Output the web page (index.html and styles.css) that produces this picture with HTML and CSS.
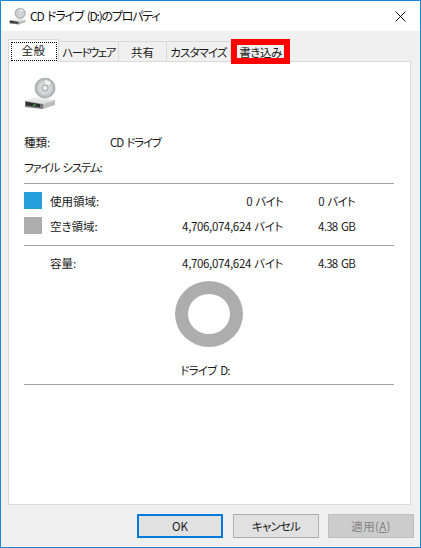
FILE: index.html
```html
<!DOCTYPE html>
<html lang="ja">
<head>
<meta charset="utf-8">
<title>CD ドライブ (D:)のプロパティ</title>
<link rel="stylesheet" href="styles.css">
</head>
<body>
<svg width="0" height="0" class="defs">
  <defs>
    <radialGradient id="disc" cx="50%" cy="50%" r="50%">
      <stop offset="0" stop-color="#f2f2f2"/>
      <stop offset="0.6" stop-color="#d3d6d6"/>
      <stop offset="1" stop-color="#a9adad"/>
    </radialGradient>
    <linearGradient id="top" x1="0" y1="0" x2="0" y2="1">
      <stop offset="0" stop-color="#fafafa"/>
      <stop offset="1" stop-color="#d8d8d8"/>
    </linearGradient>
    <symbol id="cd" viewBox="0 0 32 32">
      <path d="M1 23 13 18l18 4-12 4z" fill="url(#top)"/>
      <path d="M19 26l12-4v5l-12 4z" fill="#bdbdbd"/>
      <circle cx="21" cy="10" r="10" fill="url(#disc)" stroke="#a2a6a6" stroke-width="0.8"/>
      <path d="M21 2a8 8 0 0 1 6 3l-4 3a3 3 0 0 0-2-1z" fill="#eef3ee"/>
      <circle cx="21" cy="10" r="3.200" fill="#e8e8e8" stroke="#9a9a9a" stroke-width="1"/>
      <path d="M1 23l18 3v5L1 29z" fill="#777"/>
      <path d="M2 24l14 2.300v3L2 27.200z" fill="#2a2a2a"/>
      <path d="M9 26.500h3v1.200H9z" fill="#3db24a"/>
    </symbol>
  </defs>
</svg>
<div class="window">
  <header class="titlebar">
    <svg class="title-icon" width="17" height="17"><use href="#cd"/></svg>
    <span class="title-text">CD ドライブ (D:)のプロパティ</span>
    <svg class="close" width="11" height="11" viewBox="0 0 11 11"><path d="M.5.500l10 10M10.500.500l-10 10" stroke="#111" stroke-width="1" fill="none"/></svg>
  </header>
  <main class="client">
    <nav class="tabs">
      <div class="tab tab-active"><span class="focus">全般</span></div>
      <div class="tab tab-hw">ハードウェア</div>
      <div class="tab tab-share">共有</div>
      <div class="tab tab-custom">カスタマイズ</div>
      <div class="tab tab-burn"><span class="burn-label">書き込み</span></div>
    </nav>
    <section class="panel">
      <svg class="drive-icon" width="32" height="32"><use href="#cd"/></svg>
      <div class="info info-first"><span class="info-label">種類:</span><span class="tight">CD ドライブ</span></div>
      <div class="info info-second"><span class="info-label tight">ファイル システム:</span></div>
      <hr class="rule rule-a">
      <div class="usage usage-first">
        <i class="swatch swatch-used"></i><span>使用領域:</span><span class="num num-short">0 バイト</span><span class="num num-short">0 バイト</span>
      </div>
      <div class="usage usage-second">
        <i class="swatch swatch-free"></i><span>空き領域:</span><span class="num">4,706,074,624 バイト</span><span class="num num-short">4.38 GB</span>
      </div>
      <hr class="rule rule-b">
      <div class="usage usage-total">
        <i></i><span>容量:</span><span class="num">4,706,074,624 バイト</span><span class="num num-short">4.38 GB</span>
      </div>
      <div class="ring-wrap"><div class="ring"></div></div>
      <div class="drive-label">ドライブ D:</div>
      <hr class="rule rule-c">
    </section>
    <footer class="buttons">
      <button class="btn btn-ok">OK</button>
      <button class="btn btn-cancel">キャンセル</button>
      <button class="btn btn-apply" disabled>適用(<u>A</u>)</button>
    </footer>
  </main>
</div>
</body>
</html>
```
FILE: styles.css
```css
* { box-sizing: border-box; }
html, body { margin: 0; padding: 0; }
body {
  width: 421px;
  height: 548px;
  overflow: hidden;
  font-family: "Noto Sans CJK JP", "Noto Sans", sans-serif;
  font-size: 11.500px;
  font-feature-settings: "palt";
  line-height: 16px;
  color: #1a1a1a;
}
.defs { position: absolute; }
.window {
  width: 421px;
  height: 548px;
  border: 1px solid #1a86d8;
  display: flex;
  flex-direction: column;
  background: #f0f0f0;
}
.titlebar {
  height: 30px;
  background: #fff;
  display: flex;
  align-items: center;
  padding: 0 14px 0 8px;
  flex: none;
}
.title-icon { flex: none; }
.title-text {
  margin-left: 4px;
  font-size: 12px;
  letter-spacing: -1.200px;
  word-spacing: 2px;
  color: #111;
}
.close { margin-left: auto; }
.client {
  flex: 1;
  display: flex;
  flex-direction: column;
  padding: 8px 8px 0 7px;
}
.tabs {
  display: flex;
  align-items: flex-end;
  height: 22px;
  flex: none;
  position: relative;
  z-index: 1;
}
.tab {
  height: 20px;
  background: #f0f0f0;
  border: 1px solid #d9d9d9;
  border-bottom: 0;
  border-left: 0;
  display: flex;
  align-items: center;
  justify-content: center;
  white-space: nowrap;
}
.tab-active {
  width: 51px;
  height: 23px;
  margin-bottom: -1px;
  background: #fff;
  border-left: 1px solid #d9d9d9;
}
.focus {
  width: 46px;
  height: 19px;
  outline: 1px dotted #000;
  outline-offset: -1px;
  text-align: center;
  line-height: 17px;
  letter-spacing: 0.500px;
}
.tab-hw { width: 60px; letter-spacing: -1.600px; }
.tab-share { width: 48px; }
.tab-custom { width: 64px; letter-spacing: -0.900px; }
.tab-burn {
  width: 59px;
  height: 25px;
  margin-bottom: -3px;
  background: #f0f0f0;
  border: 6px solid #f00;
  position: relative;
  z-index: 2;
  letter-spacing: -0.400px;
}
.panel {
  width: 403px;
  height: 444px;
  background: #fff;
  border: 1px solid #d9d9d9;
  padding: 16px 16px 0 15px;
  flex: none;
}
.drive-icon { display: block; margin-bottom: 24px; }
.info { display: flex; height: 16px; }
.info-label { width: 86px; white-space: nowrap; }
.tight { letter-spacing: -1.200px; word-spacing: 2px; }
.info-second { margin-top: 9px; }
.rule {
  border: 0;
  height: 1px;
  background: #a0a0a0;
  margin: 0;
}
.rule-a { margin-top: 8px; }
.usage {
  display: grid;
  grid-template-columns: 26px 90px 143px 72px;
  align-items: center;
  height: 17px;
  white-space: nowrap;
}
.usage-first { margin-top: 8px; }
.usage-second { margin-top: 8px; }
.usage-total { margin-top: 8px; }
.rule-b { margin-top: 11px; }
.swatch { width: 18px; height: 17px; display: block; }
.swatch-used { background: #26a0da; }
.swatch-free { background: #adadad; }
.num { text-align: right; letter-spacing: -0.350px; word-spacing: 1px; }
.num-short { letter-spacing: -0.700px; word-spacing: 1.500px; }
.ring-wrap { display: flex; justify-content: center; margin-top: 10px; padding-right: 1px; }
.ring {
  width: 68px;
  height: 66px;
  border-radius: 50%;
  border: 13px solid #adadad;
  background: #fff;
}
.drive-label { text-align: center; margin-top: 15px; padding-right: 8px; letter-spacing: -0.800px; word-spacing: 2px; }
.rule-c { margin-top: 6px; }
.buttons {
  display: flex;
  gap: 9px;
  justify-content: flex-end;
  padding-top: 9px;
  margin-right: -2px;
}
.btn {
  width: 86px;
  height: 24px;
  font: inherit;
  font-feature-settings: "palt";
  padding: 0;
  background: #e1e1e1;
  border: 1px solid #adadad;
  color: #1a1a1a;
}
.btn-ok { border: 2px solid #0078d7; margin-right: 1px; }
.btn-cancel { letter-spacing: -0.800px; }
.btn-apply { background: #cccccc; border-color: #bfbfbf; color: #838383; letter-spacing: 0.300px; }
```
